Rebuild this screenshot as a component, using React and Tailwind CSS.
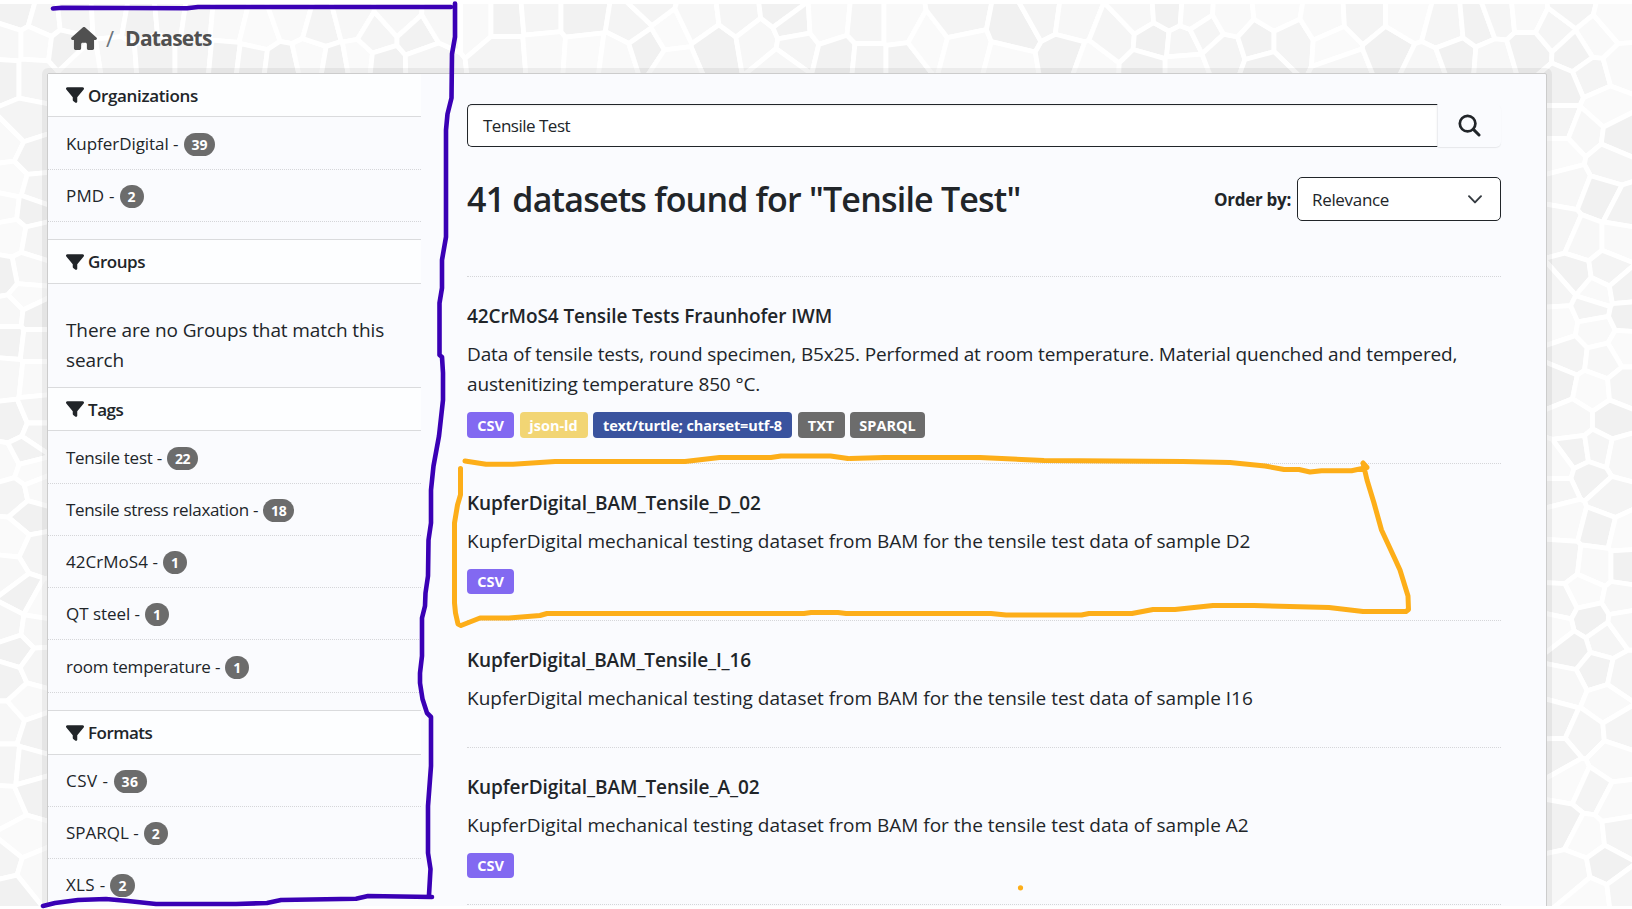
import { FaFilter, FaHouse } from "react-icons/fa6";

const VIEW_W = 1632;
const VIEW_H = 909;

/* Cell centres of the mosaic backdrop, flattened as x, y pairs. */
const seeds = [
  17, 12, 45, 20, 7, 43, 35, 43, 5, 77, 33, 77, 24, 123, 5, 142, 35, 157, 10, 182, 38, 190, 5, 207, 31, 210, 10, 235, 38, 240, 28, 272, 3, 277, 26, 297,
  73, 17, 111, 15, 66, 47, 139, 20, 173, 17, 115, 60, 83, 65, 156, 57, 194, 20, 194, 57, 229, 23, 226, 60, 257, 30, 250, 63, 291, 18, 281, 67, 312, 60,
  323, 27, 350, 20, 335, 64, 357, 60, 378, 37, 399, 18, 386, 63, 416, 37, 425, 62, 444, 20,
  477, 20, 505, 20, 540, 17, 505, 53, 543, 50, 582, 17, 586, 53, 632, 25, 616, 57, 647, 47, 670, 33, 650, 6, 697, 20, 716, 47, 674, 65, 739, 15, 758, 40,
  781, 10, 792, 25, 796, 47, 781, 68, 827, 23, 838, 57, 869, 27, 869, 60, 899, 27, 903, 60, 926, 42, 957, 18, 964, 52, 1018, 30, 1010, 64, 1043, 16,
  1072, 20, 1063, 55, 1093, 66, 1115, 37, 1138, 15, 1153, 40, 1168, 13, 1183, 43, 1194, 15, 1185, 68, 1145, 68, 1205, 32, 1224, 53, 1231, 17, 1258, 42,
  1276, 12, 1290, 42, 1325, 20, 1265, 68, 1336, 45, 1363, 18, 1344, 68, 1389, 50, 1408, 18, 1445, 28, 1426, 68, 1456, 57, 1479, 25, 1498, 18, 1494, 60,
  1528, 15, 1528, 50, 1554, 28, 1569, 8, 1595, 40, 1576, 52, 1618, 20, 1592, 75, 1621, 67, 1561, 88, 1606, 107, 1561, 123, 1584, 132, 1621, 137,
  1561, 154, 1610, 163, 1569, 185, 1600, 197, 1625, 210, 1561, 230, 1584, 240, 1620, 240, 1573, 275, 1556, 290, 1608, 270, 1596, 295, 1625, 290,
  1558, 323, 1592, 308, 1596, 330, 1627, 315, 1625, 347, 1569, 356, 1603, 360, 1558, 383, 1592, 390, 1625, 387, 1573, 420, 1612, 420, 1577, 453,
  1597, 450, 1622, 455, 1558, 467, 1588, 476, 1558, 490, 1610, 500, 1565, 518, 1600, 527, 1625, 533, 1562, 563, 1595, 567, 1627, 567, 1584, 592,
  1560, 604, 1622, 600, 1590, 620, 1555, 628, 1604, 640, 1626, 624, 1572, 650, 1596, 670, 1624, 676, 1565, 686, 1606, 703, 1556, 720, 1585, 733,
  1622, 730, 1612, 760, 1557, 757, 1570, 780, 1592, 790, 1617, 803, 1562, 826, 1585, 838, 1622, 834, 1572, 872, 1605, 866, 1592, 896, 1624, 892,
  10, 313, 35, 316, 10, 340, 35, 343, 7, 377, 35, 380, 12, 423, 38, 412, 38, 434, 5, 463, 26, 452, 31, 472, 14, 495, 38, 490, 31, 515, 10, 540, 38, 553,
  7, 572, 24, 595, 40, 604, 8, 626, 36, 630, 16, 650, 7, 680, 38, 666, 7, 722, 28, 703, 38, 732, 7, 766, 28, 768, 5, 806, 35, 793, 22, 838, 3, 862,
  36, 872, 10, 893,
];

const shades = ["#f2f2f2", "#f9f9f9", "#f4f4f4", "#fafafa", "#f1f1f1", "#f7f7f7", "#f5f5f5"];

const points = [];
for (let i = 0; i < seeds.length; i += 2) points.push([seeds[i], seeds[i + 1]]);

/* Clip a polygon to the half plane that is nearer to p than to q. */
function clip(poly, p, q) {
  const nx = q[0] - p[0];
  const ny = q[1] - p[1];
  const c = (q[0] ** 2 - p[0] ** 2 + q[1] ** 2 - p[1] ** 2) / 2;
  const out = [];
  poly.forEach((a, i) => {
    const b = poly[(i + 1) % poly.length];
    const da = a[0] * nx + a[1] * ny - c;
    const db = b[0] * nx + b[1] * ny - c;
    if (da <= 0) out.push(a);
    if (da <= 0 !== db <= 0) {
      const t = da / (da - db);
      out.push([a[0] + (b[0] - a[0]) * t, a[1] + (b[1] - a[1]) * t]);
    }
  });
  return out;
}

const cells = points.map((p) => {
  let poly = [[-6, -6], [VIEW_W + 6, -6], [VIEW_W + 6, VIEW_H + 6], [-6, VIEW_H + 6]];
  points.forEach((q) => {
    if (q !== p && poly.length) poly = clip(poly, p, q);
  });
  return poly.map((v) => v.map((n) => n.toFixed(1)).join(",")).join(" ");
});

function Mosaic() {
  return (
    <svg className="absolute inset-0" width="1632" height="909" viewBox="0 0 1632 909" aria-hidden="true">
      {cells.map((c, i) => (
        <polygon key={i} points={c} fill={shades[(i * 5 + (i % 3)) % 7]} stroke="#ffffff" strokeWidth="4.8" strokeLinejoin="round" />
      ))}
      <rect x="0" y="0" width="1632" height="4" fill="#ffffff" />
      <rect x="0" y="906" width="1632" height="3" fill="#ffffff" />
    </svg>
  );
}

function Annotations() {
  return (
    <svg className="pointer-events-none absolute inset-0" width="1632" height="909" viewBox="0 0 1632 909" fill="none" strokeLinecap="round" strokeLinejoin="round" aria-hidden="true">
      <g stroke="#3a00b5" strokeWidth="4.6">
        <path d="M53 8.5 62 7.7 187 8.3 198 7H451" />
        <path d="M455 3.5V37L452 54 451.5 98 447.5 114 446 130V237L442 260V288L439.5 303V355L442 357 443 373V400L439 436 433.5 466 431 490V523L428.5 540 428 576 425.5 593 425 606 422 618V656L420 673V683L422.5 699 427 713 431 717V766L428 806V853L430.5 869 429 895" />
        <path d="M432 897 368 896 356 898.7 281 900 267 903 236 904H156L128 901 106 899 78 900 55 903 43 906" />
      </g>
      <g stroke="#fdae19" strokeWidth="5">
        <path d="M465 461 486 464.3H513L555 461.5H685L719.5 457.5H771L781 456H830.5L848 458.5" />
        <path d="M850 458.5 884 457.5H980L1044 460.5 1183 461.5 1230 462.5 1265 466 1284 469.5H1299L1310 472 1321.5 470.7H1351.5L1367 467.5 1363 463 1367 480 1374 503 1381.5 530 1394.5 558 1400 570 1408 596 1408.5 609.5 1406 611.5H1363L1329 607.5 1254 605.5H1213L1175 609.5H1153L1132 613.5H1089L1081.5 615H1006L991 613.5H846L838 612.5H811L804 613.5H547L540 615.5 509 618H480L461 625.5 458 624 455.5 613 454.5 603V523L457.5 505 460.5 494.7V468.5" />
      </g>
      <circle cx="1020.5" cy="887.8" r="2.6" fill="#fdae19" />
    </svg>
  );
}

const dotted = "border-b border-dotted border-[#d5d6d9]";

function FacetHeading({ label, className }) {
  return (
    <h2 className={`flex shrink-0 items-center gap-[4px] border-[#dadbdd] bg-[#fdfeff] pl-[18px] text-[17px] font-semibold text-[#212529] ${className}`}>
      <FaFilter className="h-[18px] w-[18px]" preserveAspectRatio="none" />
      <span className="pt-px">{label}</span>
    </h2>
  );
}

function FacetItem({ label, count, className }) {
  return (
    <li className={`flex shrink-0 items-center gap-[5px] pt-px pl-[18px] text-[17px] text-[#212529] ${dotted} ${className}`}>
      <span className="whitespace-nowrap">{label} -</span>
      <span className="mt-px flex h-[23px] min-w-[24px] items-center justify-center rounded-full bg-[#6c6c6c] px-[8px] text-[14px] font-bold text-white">{count}</span>
    </li>
  );
}

const badgeColors = {
  CSV: "w-[47px] bg-[#8269f1]",
  "json-ld": "w-[68px] bg-[#f2d574]",
  "text/turtle; charset=utf-8": "w-[199px] bg-[#3a539e] tracking-[-0.12px]",
  TXT: "w-[47px] bg-[#6c6c6c]",
  SPARQL: "w-[75px] bg-[#6c6c6c]",
};

function Dataset({ title, lines, formats, className, badgeHeight = "h-[25px]", titleClass = "tracking-[-0.07px]", textClass = "" }) {
  return (
    <li className={`shrink-0 pt-[24px] ${dotted} ${className}`}>
      <h3 className={`text-[19px] leading-[30px] font-semibold whitespace-nowrap ${titleClass}`}>{title}</h3>
      <div className={`mt-2 text-[19px] leading-[30px] whitespace-nowrap ${textClass}`}>
        {lines.map((l) => (
          <p key={l}>{l}</p>
        ))}
      </div>
      <ul className="mt-[13px] flex gap-[5.5px]">
        {formats.map((f) => (
          <li key={f} className={`flex items-center justify-center rounded-[4px] pt-px text-[14.5px] font-bold whitespace-nowrap text-white ${badgeHeight} ${badgeColors[f]}`}>
            {f}
          </li>
        ))}
      </ul>
    </li>
  );
}

export default function App() {
  return (
    <div className="relative h-[909px] w-[1632px] overflow-hidden bg-white font-['Open_Sans','Noto_Sans',sans-serif] text-[#212529]">
      <Mosaic />
      <div className="relative flex h-[906px] flex-col overflow-hidden pt-[4px]">
        <nav className="flex h-[69px] shrink-0 items-center pl-[71px] text-[21px] text-[#505050]">
          <FaHouse className="h-[23px] w-[26px]" />
          <span className="ml-[9px] text-[22px] text-[#6c757d]">/</span>
          <span className="ml-[11px] font-bold tracking-[-0.74px]">Datasets</span>
        </nav>
        <div className="ml-[47px] flex h-[860px] w-[1500px] shrink-0 rounded-[2px] border border-[#cccccc] bg-[#fafbfe] shadow-[0_0_0_5px_rgba(0,0,0,0.05)]">
          <aside className="flex w-[373px] shrink-0 flex-col">
            <FacetHeading label="Organizations" className="h-[43px] border-b tracking-[-0.35px]" />
            <ul className="mb-[17px] flex flex-col">
              <FacetItem label="KupferDigital" count="39" className="h-[53px] tracking-[-0.05px]" />
              <FacetItem label="PMD" count="2" className="h-[52px] tracking-[0.15px]" />
            </ul>
            <FacetHeading label="Groups" className="h-[45px] border-y tracking-[-0.45px]" />
            <p className="h-[103px] shrink-0 pt-[31px] pl-[18px] text-[19px] leading-[30px] tracking-[-0.11px]">
              There are no Groups that match this
              <br />
              search
            </p>
            <FacetHeading label="Tags" className="h-[44px] border-y tracking-[-0.45px]" />
            <ul className="mb-[17px] flex flex-col">
              <FacetItem label="Tensile test" count="22" className="h-[53px] tracking-[-0.27px]" />
              <FacetItem label="Tensile stress relaxation" count="18" className="h-[52px] tracking-[-0.32px]" />
              <FacetItem label="42CrMoS4" count="1" className="h-[52px] tracking-[0.04px]" />
              <FacetItem label="QT steel" count="1" className="h-[52px] tracking-[-0.04px]" />
              <FacetItem label="room temperature" count="1" className="h-[53px] tracking-[-0.22px]" />
            </ul>
            <FacetHeading label="Formats" className="h-[45px] border-y tracking-[-0.5px]" />
            <ul className="flex flex-col">
              <FacetItem label="CSV" count="36" className="h-[52px] tracking-[0.5px]" />
              <FacetItem label="SPARQL" count="2" className="h-[52px]" />
              <FacetItem label="XLS" count="2" className="h-[52px] tracking-[0.3px]" />
            </ul>
          </aside>
          <main className="ml-[46px] flex w-[1034px] flex-col pt-[30px]">
            <form className="flex h-[43px] shrink-0">
              <div className="flex w-[971px] items-center rounded-l-[5px] border border-[#212529] border-r-[#eeeff2] bg-white pl-[15px] text-[17px] tracking-[-0.5px] shadow-[inset_0_1px_2px_rgba(0,0,0,0.08)]">
                Tensile Test
              </div>
              <button type="button" className="flex h-[43px] flex-1 items-center justify-center rounded-r-[5px] bg-[#fafbfe] shadow-[0_1px_1px_rgba(0,0,0,0.08)]">
                <svg className="mr-[1px]" width="23" height="23" viewBox="0 0 23 23" fill="none" stroke="#212529" strokeLinecap="round">
                  <circle cx="9.6" cy="9.6" r="7.8" strokeWidth="2.7" />
                  <path d="M15.4 15.4 21 21" strokeWidth="3" />
                </svg>
              </button>
            </form>
            <div className="mt-[30px] flex h-[44px] shrink-0 items-center justify-between">
              <h1 className="pt-px text-[34px] font-semibold tracking-[-0.8px] whitespace-nowrap">41 datasets found for "Tensile Test"</h1>
              <div className="flex items-center gap-[6px]">
                <span className="pt-px text-[17px] font-bold tracking-[-0.27px] whitespace-nowrap">Order by:</span>
                <div className="flex h-[44px] w-[204px] items-center justify-between rounded-[5px] border border-[#212529] bg-white pt-px pr-[18px] pl-[14px] text-[17px] tracking-[-0.32px]">
                  Relevance
                  <svg width="14" height="9" viewBox="0 0 14 9" fill="none" stroke="#343a40" strokeWidth="1.9" strokeLinecap="round" strokeLinejoin="round">
                    <path d="M1 1.2 7 7.4 13 1.2" />
                  </svg>
                </div>
              </div>
            </div>
            <ul className="mt-[55px] flex flex-col border-t border-dotted border-[#d5d6d9]">
              <Dataset
                className="h-[187px]"
                badgeHeight="h-[26px]"
                title="42CrMoS4 Tensile Tests Fraunhofer IWM"
                titleClass="tracking-[-0.1px]"
                textClass="tracking-[-0.13px]"
                lines={[
                  "Data of tensile tests, round specimen, B5x25. Performed at room temperature. Material quenched and tempered,",
                  "austenitizing temperature 850 °C.",
                ]}
                formats={["CSV", "json-ld", "text/turtle; charset=utf-8", "TXT", "SPARQL"]}
              />
              <Dataset className="h-[157px]" title="KupferDigital_BAM_Tensile_D_02" lines={["KupferDigital mechanical testing dataset from BAM for the tensile test data of sample D2"]} formats={["CSV"]} />
              <Dataset className="h-[127px]" title="KupferDigital_BAM_Tensile_I_16" titleClass="tracking-[-0.13px]" lines={["KupferDigital mechanical testing dataset from BAM for the tensile test data of sample I16"]} formats={[]} />
              <Dataset className="h-[157px]" title="KupferDigital_BAM_Tensile_A_02" lines={["KupferDigital mechanical testing dataset from BAM for the tensile test data of sample A2"]} formats={["CSV"]} />
            </ul>
          </main>
        </div>
      </div>
      <Annotations />
    </div>
  );
}
